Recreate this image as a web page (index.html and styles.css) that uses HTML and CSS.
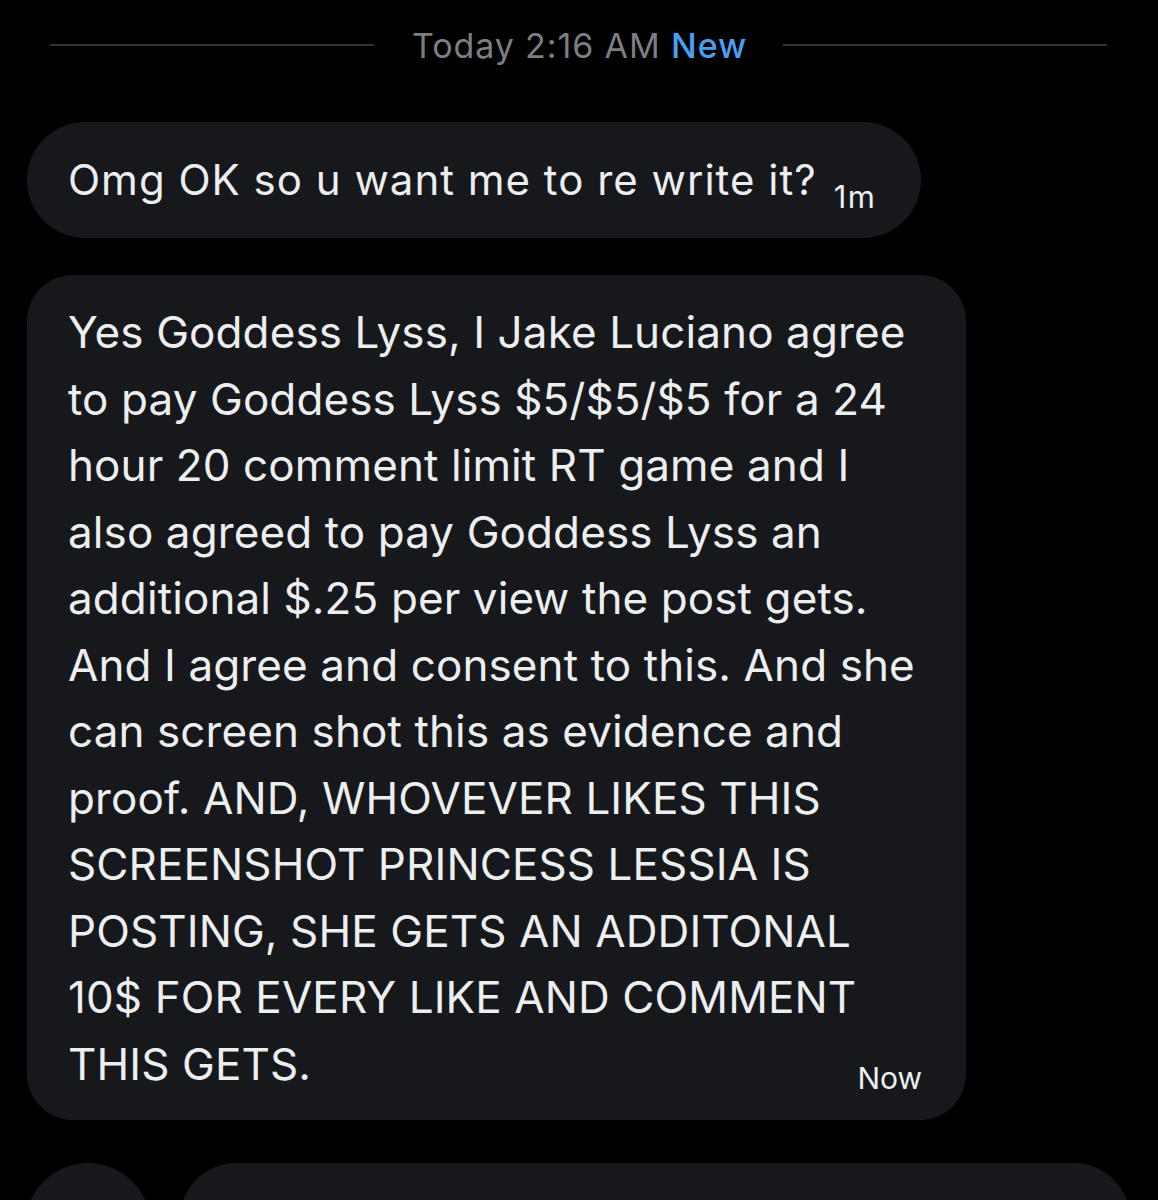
FILE: index.html
```html
<!DOCTYPE html>
<html>
<head>
<meta charset="utf-8">
<link rel="stylesheet" href="styles.css">
</head>
<body>
<div class="screen">
  <div class="divider">
    <span class="rule"></span>
    <span class="stamp">Today 2:16 AM <span class="new">New</span></span>
    <span class="rule"></span>
  </div>

  <div class="msg msg-short">
    <span class="msg-text short-text">Omg OK so u want me to re write it?</span>
    <span class="time time-short">1m</span>
  </div>

  <div class="msg msg-long">
    <p class="msg-text long-text">Yes Goddess Lyss, I Jake Luciano agree<br>to pay Goddess Lyss $5/$5/$5 for a 24<br>hour 20 comment limit RT game and I<br>also agreed to pay Goddess Lyss an<br>additional $.25 per view the post gets.<br>And I agree and consent to this. And she<br>can screen shot this as evidence and<br>proof. AND, WHOVEVER LIKES THIS<br>SCREENSHOT PRINCESS LESSIA IS<br>POSTING, SHE GETS AN ADDITONAL<br>10$ FOR EVERY LIKE AND COMMENT<br>THIS GETS.</p>
    <span class="time time-long">Now</span>
  </div>

  <div class="next-row">
    <div class="avatar"></div>
    <div class="next-bubble"></div>
  </div>
</div>
</body>
</html>
```

FILE: styles.css
```css
html, body {
  margin: 0;
  padding: 0;
  background: #000;
}
.screen {
  width: 1158px;
  height: 1200px;
  overflow: hidden;
  background: #000;
  font-family: "Inter", "Liberation Sans", sans-serif;
  color: #eceef0;
}
.divider {
  display: flex;
  align-items: center;
  padding: 0 51px 0 50px;
  height: 90px;
}
.rule {
  flex: 1;
  height: 2px;
  background: #2f3133;
}
.stamp {
  margin: 0 36px 0 38px;
  font-size: 34px;
  color: #7d7e82;
  letter-spacing: 0.9px;
  white-space: nowrap;
}
.new {
  color: #4b9ff0;
  font-weight: 500;
}
.msg {
  background: #17181b;
  margin-left: 27px;
  box-sizing: border-box;
}
.msg-short {
  margin-top: 32px;
  width: 894px;
  height: 116px;
  border-radius: 58px;
  display: flex;
  align-items: baseline;
  padding: 0 0 0 41px;
  line-height: 116px;
}
.msg-text {
  margin: 0;
  white-space: nowrap;
}
.short-text {
  font-size: 42px;
  letter-spacing: 1px;
}
.time {
  color: #eceef0;
}
.time-short {
  font-size: 31px;
  letter-spacing: 1.5px;
  margin-left: 17px;
  position: relative;
  top: 13px;
}
.msg-long {
  margin-top: 37px;
  width: 939px;
  height: 845px;
  border-radius: 46px;
  display: grid;
  padding: 24px 44px 22px 41px;
}
.long-text {
  grid-area: 1 / 1;
  align-self: start;
  font-size: 44px;
  line-height: 66.5px;
  letter-spacing: 0.1px;
}
.time-long {
  grid-area: 1 / 1;
  justify-self: end;
  align-self: end;
  font-size: 30px;
  line-height: 40px;
}
.next-row {
  display: flex;
  gap: 29px;
  margin-top: 43px;
  padding-left: 25px;
}
.avatar {
  flex: none;
  width: 126px;
  height: 126px;
  border-radius: 50%;
  background: #17181b;
}
.next-bubble {
  flex: none;
  width: 950px;
  height: 112px;
  border-radius: 56px;
  background: #17181b;
}
```
